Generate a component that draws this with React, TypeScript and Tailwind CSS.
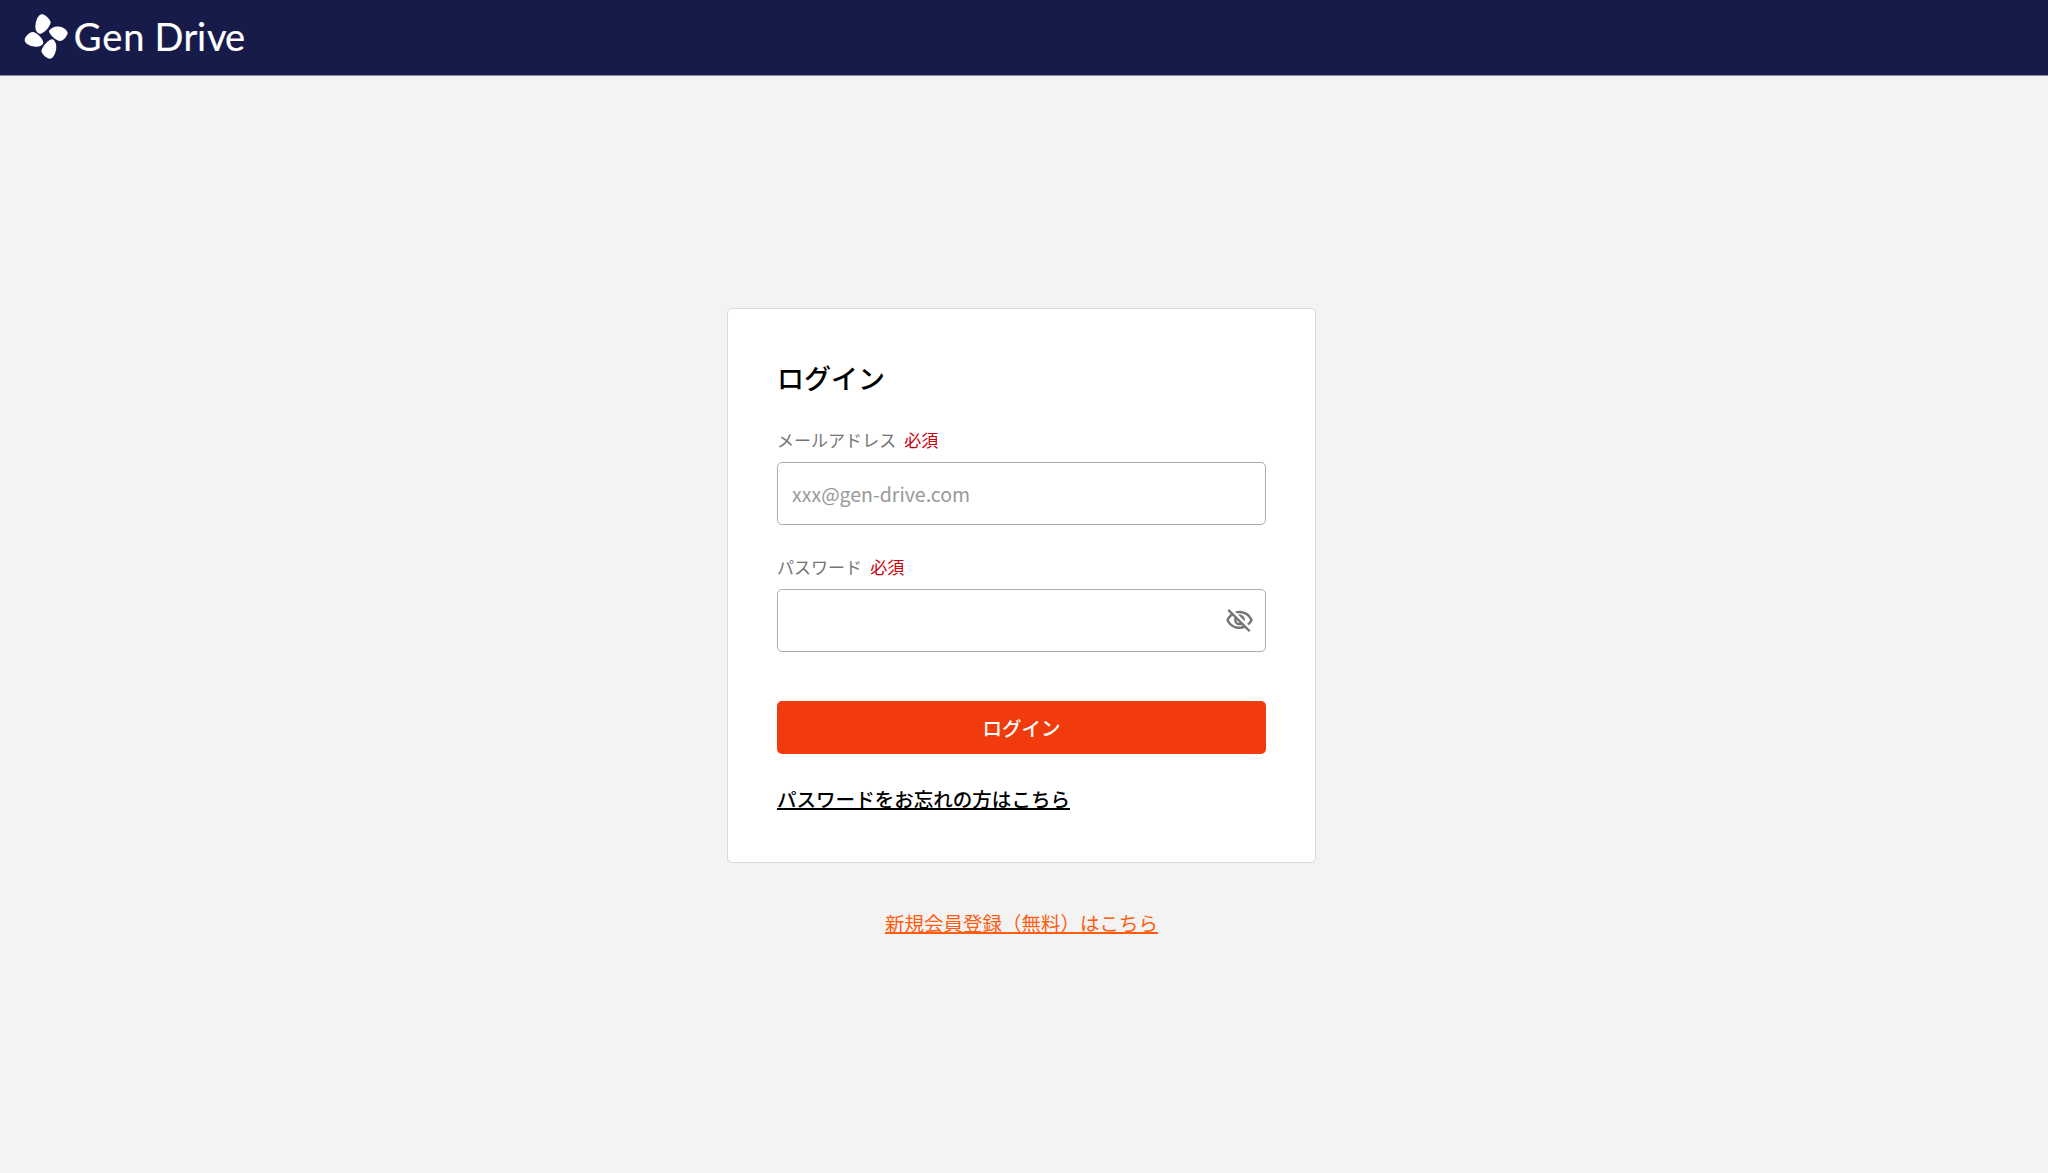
import { MdOutlineVisibilityOff } from "react-icons/md";

function Logo() {
    return (
        <svg width="260" height="75" viewBox="0 0 260 75" fill="#fff" aria-label="Gen Drive">
            <g transform="scale(0.33333)">
                <path d="M120 102C108 98 103 85 108 66C112 50 120 42 128 43C138 45 152 60 152 68C150 80 132 100 120 102Z" />
                <path d="M147 93C152 83 168 77 180 80C192 82 203 92 203 99C202 108 190 123 180 123C168 122 148 104 147 93Z" />
                <path d="M158 118C166 122 171 136 168 150C164 168 156 177 148 176C138 174 124 160 124 152C127 140 146 117 158 118Z" />
                <path d="M130 128C128 138 112 142 98 139C84 136 73 127 74 119C75 110 88 96 98 96C108 96 130 115 130 128Z" />
            </g>
            <text
                x="73.8 102.2 123.2 154.6 183.6 197 207 225"
                y="51"
                fontSize="38"
                stroke="#fff"
                strokeWidth="0.2"
                className="font-[Lato,sans-serif]"
            >
                GenDrive
            </text>
        </svg>
    );
}

function Label({ text }: { text: string }) {
    return (
        <label className="flex h-[26px] items-center gap-2 text-[17.05px] text-[#757575]">
            {text}
            <span className="text-[#c7000b]">必須</span>
        </label>
    );
}

export default function App() {
    return (
        <div className="flex min-h-screen flex-col bg-[#f3f3f3] font-['Noto_Sans_CJK_JP',sans-serif] text-black">
            <header className="h-[76px] border-b border-[#8a8ba3] bg-[#171b4a]">
                <Logo />
            </header>

            <main className="flex flex-col items-center pt-[232px] pr-[5px]">
                <form className="flex h-[555px] w-[589px] flex-col rounded-[5px] border border-[#d9d9d9] bg-white px-[49px] pt-[48px]">
                    <h1 className="text-[27px] leading-[42px] font-medium">ログイン</h1>

                    {/* メールアドレス */}
                    <div className="mt-[28px]">
                        <Label text="メールアドレス" />
                        <input
                            type="email"
                            placeholder="xxx@gen-drive.com"
                            className="mt-[9px] block h-[63px] w-full rounded-[5px] border border-[#aeaeae] px-[14px] text-[19.5px] placeholder:text-[#999]"
                        />
                    </div>

                    {/* パスワード */}
                    <div className="mt-[29px]">
                        <Label text="パスワード" />
                        <div className="mt-[9px] flex h-[63px] items-center rounded-[5px] border border-[#aeaeae] pr-[11px]">
                            <input type="password" className="h-full min-w-0 flex-1 px-[14px] outline-none" />
                            <MdOutlineVisibilityOff className="size-[29px] text-[#757575]" />
                        </div>
                    </div>

                    <button
                        type="button"
                        className="mt-[49px] h-[53px] rounded-[5px] bg-[#f23b0c] text-[19.5px] font-medium text-white"
                    >
                        ログイン
                    </button>
                    <a
                        href="#"
                        className="mt-[30px] self-start text-[19.55px] leading-[29px] font-medium underline decoration-2"
                    >
                        パスワードをお忘れの方はこちら
                    </a>
                </form>

                <a href="#" className="mt-[45px] text-[19.5px] leading-[29px] text-[#ff5c0f] underline decoration-2">
                    新規会員登録（無料）はこちら
                </a>
            </main>
        </div>
    );
}
